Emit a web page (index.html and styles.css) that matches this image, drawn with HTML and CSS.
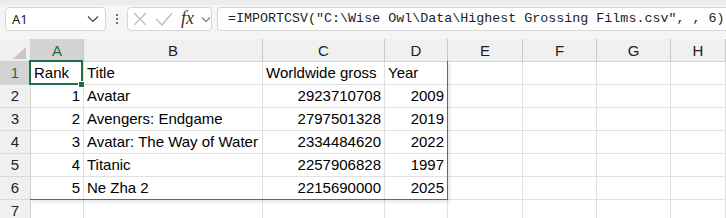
FILE: index.html
```html
<!DOCTYPE html>
<html>
<head>
<meta charset="utf-8">
<link rel="stylesheet" href="styles.css">
</head>
<body>
<div class="toolbar">
  <div class="namebox">
    <span class="nb-text">A1</span>
    <svg class="chev" width="12" height="8" viewBox="0 0 12 8"><polyline points="1,1.5 6,6.5 11,1.5" fill="none" stroke="#444" stroke-width="1.2"/></svg>
  </div>
  <div class="dots"><span></span><span></span><span></span></div>
  <div class="fbuttons">
    <svg class="ico-x" width="14" height="14" viewBox="0 0 14 14"><path d="M1 1 L13 13 M13 1 L1 13" stroke="#bdbdbd" stroke-width="1.3" fill="none"/></svg>
    <svg class="ico-ok" width="18" height="14" viewBox="0 0 18 14"><polyline points="1,7 7,13 17,1" stroke="#bdbdbd" stroke-width="1.3" fill="none"/></svg>
    <span class="fx">fx</span>
    <svg class="chev2" width="10" height="7" viewBox="0 0 10 7"><polyline points="1,1.5 5,5.5 9,1.5" fill="none" stroke="#777" stroke-width="1.1"/></svg>
  </div>
  <div class="formula">=IMPORTCSV("C:\Wise Owl\Data\Highest Grossing Films.csv", , 6)</div>
</div>

<div class="sheet">
  <div class="corner"><svg width="31" height="23" viewBox="0 0 31 23"><polygon points="26,8 26,20 13,20" fill="#c6c6c6"/></svg></div>
  <div class="ch sel-h">A</div>
  <div class="ch">B</div>
  <div class="ch">C</div>
  <div class="ch">D</div>
  <div class="ch">E</div>
  <div class="ch">F</div>
  <div class="ch">G</div>
  <div class="ch">H</div>

  <div class="rh sel-h">1</div>
  <div class="c">Rank</div><div class="c">Title</div><div class="c">Worldwide gross</div><div class="c">Year</div><div class="c"></div><div class="c"></div><div class="c"></div><div class="c"></div>

  <div class="rh">2</div>
  <div class="c n">1</div><div class="c">Avatar</div><div class="c n">2923710708</div><div class="c n">2009</div><div class="c"></div><div class="c"></div><div class="c"></div><div class="c"></div>

  <div class="rh">3</div>
  <div class="c n">2</div><div class="c">Avengers: Endgame</div><div class="c n">2797501328</div><div class="c n">2019</div><div class="c"></div><div class="c"></div><div class="c"></div><div class="c"></div>

  <div class="rh">4</div>
  <div class="c n">3</div><div class="c">Avatar: The Way of Water</div><div class="c n">2334484620</div><div class="c n">2022</div><div class="c"></div><div class="c"></div><div class="c"></div><div class="c"></div>

  <div class="rh">5</div>
  <div class="c n">4</div><div class="c">Titanic</div><div class="c n">2257906828</div><div class="c n">1997</div><div class="c"></div><div class="c"></div><div class="c"></div><div class="c"></div>

  <div class="rh">6</div>
  <div class="c n">5</div><div class="c">Ne Zha 2</div><div class="c n">2215690000</div><div class="c n">2025</div><div class="c"></div><div class="c"></div><div class="c"></div><div class="c"></div>

  <div class="rh">7</div>
  <div class="c"></div><div class="c"></div><div class="c"></div><div class="c"></div><div class="c"></div><div class="c"></div><div class="c"></div><div class="c"></div>

  <div class="spill"></div>
  <div class="selection"><span class="handle"></span></div>
</div>
</body>
</html>
```

FILE: styles.css
```css
html, body {
  margin: 0;
  padding: 0;
  background: #ffffff;
  overflow: hidden;
  font-family: "Liberation Sans", Arial, sans-serif;
}

.toolbar {
  height: 39px;
  box-sizing: border-box;
  background: #f5f5f5;
  border-top: 5px solid #ececec;
  display: flex;
  align-items: flex-start;
  padding: 2px 0 0 5px;
  white-space: nowrap;
  overflow: hidden;
}

.namebox {
  width: 101px;
  height: 24px;
  box-sizing: border-box;
  background: #fff;
  border: 1px solid #d6d6d6;
  border-radius: 4px;
  display: flex;
  align-items: center;
  justify-content: space-between;
  padding: 0 6px 0 6px;
  flex: 0 0 auto;
}

.nb-text {
  font-size: 13px;
  color: #222;
  font-family: "Noto Sans", "Liberation Sans", sans-serif;
}

.dots {
  width: 21px;
  height: 24px;
  display: flex;
  flex-direction: column;
  align-items: center;
  justify-content: center;
  gap: 2px;
  flex: 0 0 auto;
}

.dots span {
  width: 2px;
  height: 2px;
  background: #444;
  border-radius: 1px;
}

.fbuttons {
  width: 85px;
  height: 24px;
  box-sizing: border-box;
  background: #fff;
  border: 1px solid #d6d6d6;
  border-radius: 4px;
  display: flex;
  align-items: center;
  padding-left: 5px;
  flex: 0 0 auto;
}

.ico-x { margin-right: 8px; }
.ico-ok { margin-right: 8px; }

.fx {
  font-family: "Liberation Serif", "Times New Roman", serif;
  font-style: italic;
  font-size: 18px;
  color: #333;
  width: 19px;
  line-height: 20px;
  margin-top: -2px;
}

.chev2 { margin-left: 1px; }

.formula {
  margin-left: 5px;
  flex: 1 1 auto;
  min-width: 0;
  height: 24px;
  box-sizing: border-box;
  background: #fff;
  border: 1px solid #d6d6d6;
  border-right: none;
  border-radius: 4px 0 0 4px;
  font-family: "Liberation Mono", "DejaVu Sans Mono", monospace;
  font-size: 13.35px;
  line-height: 22px;
  padding-left: 10px;
  color: #1e1e1e;
}

.sheet {
  position: relative;
  display: grid;
  grid-template-columns: 31px 53px 179px 122px 63px 75px 74px 74px 1fr;
  grid-auto-rows: 23px;
  font-size: 15px;
  color: #000;
}

.corner {
  background: #f0f0f0;
  border-right: 1px solid #cfcfcf;
  border-bottom: 1px solid #cfcfcf;
  box-sizing: border-box;
}

.corner svg { display: block; }

.ch {
  background: #f0f0f0;
  border-right: 1px solid #c8c8c8;
  border-bottom: 1px solid #d4d4d4;
  box-sizing: border-box;
  text-align: center;
  line-height: 23px;
  color: #222;
}

.rh {
  background: #f0f0f0;
  border-right: 1px solid #cfcfcf;
  border-bottom: 1px solid #d9d9d9;
  box-sizing: border-box;
  text-align: center;
  line-height: 22px;
  color: #222;
}

.sel-h {
  background: #d3d3d3;
  color: #1c6c40;
}

.c {
  border-right: 1px solid #e1e1e1;
  border-bottom: 1px solid #e1e1e1;
  box-sizing: border-box;
  padding: 0 3px 0 3px;
  line-height: 21px;
  white-space: nowrap;
  overflow: hidden;
}

.n { text-align: right; }

.spill {
  position: absolute;
  left: 30px;
  top: 22px;
  width: 418px;
  height: 139px;
  box-sizing: border-box;
  border-right: 1px solid #4169b8;
  border-bottom: 1px solid #4169b8;
  box-shadow: 2px 2px 3px rgba(0, 0, 0, 0.10);
  pointer-events: none;
}

.selection {
  position: absolute;
  left: 29px;
  top: 21px;
  width: 54px;
  height: 25px;
  box-sizing: border-box;
  border: 2px solid #1e7145;
}

.handle {
  position: absolute;
  right: -4px;
  bottom: -5px;
  width: 5px;
  height: 5px;
  background: #1e7145;
  border: 1px solid #fff;
}
```
